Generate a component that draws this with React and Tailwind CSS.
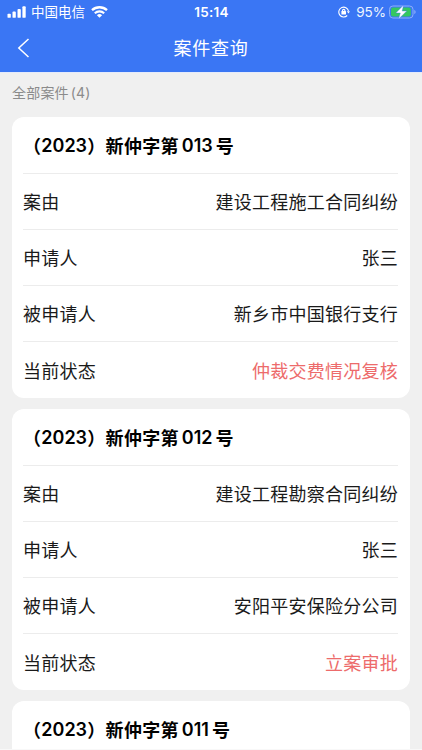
const CASOS = [
  { numero: '013', causa: '建设工程施工合同纠纷', solicitante: '张三', demandado: '新乡市中国银行支行', estado: '仲裁交费情况复核' },
  { numero: '012', causa: '建设工程勘察合同纠纷', solicitante: '张三', demandado: '安阳平安保险分公司', estado: '立案审批' },
  { numero: '011' },
]

function BarraEstado() {
  return (
    <div className="grid h-6 grid-cols-[1fr_auto_1fr] items-center pl-[7px] pr-[6px]">
      <div className="flex items-center">
        <svg className="h-3 w-[19px]" viewBox="0 0 19 12" fill="#fff">
          <rect x="0.5" y="7.7" width="3.3" height="4.1" rx="0.9" />
          <rect x="5.5" y="5.6" width="3.3" height="6.2" rx="0.9" />
          <rect x="10.5" y="3" width="3.3" height="8.8" rx="0.9" />
          <rect x="15.4" y="0.3" width="3.3" height="11.5" rx="0.9" />
        </svg>
        <span className="ml-[5px] pb-[2px] text-[13.5px] leading-[22px]">中国电信</span>
        <svg className="ml-[6px] h-3 w-[17px]" viewBox="0 0 17 12" fill="none" stroke="#fff">
          <path d="M1 4.2a11 11 0 0 1 15 0" strokeWidth="2.3" />
          <path d="M3.8 7.2a7 7 0 0 1 9.4 0" strokeWidth="2.1" />
          <path d="M8.5 11.8 5.9 9.2a3.8 3.8 0 0 1 5.2 0Z" fill="#fff" stroke="none" />
        </svg>
      </div>
      <span className="font-['Inter'] text-[13.5px] font-semibold tracking-[0.3px]">15:14</span>
      <div className="flex items-center justify-end">
        {/* bloqueo de rotación */}
        <svg className="h-3 w-3" viewBox="0 0 12 12" fill="none" stroke="#fff" strokeWidth="1.1">
          <path d="M9.2 9.5a4.9 4.9 0 1 1 1.3-4.5" />
          <path d="m8.8 5.3 3.1-.1-1.4 2.4Z" fill="#fff" stroke="none" />
          <path d="M4.5 5.6v-1a1.2 1.2 0 0 1 2.4 0v1" />
          <rect x="3.4" y="5" width="4.6" height="3.6" rx="0.5" fill="#fff" stroke="none" />
        </svg>
        <span className="ml-[6px] font-['Inter'] text-[13.5px] tracking-[0px] text-blue-50">95%</span>
        <svg className="ml-[3px] h-[14px] w-[27px]" viewBox="0 0 27 14" fill="none">
          <rect x="0.5" y="1" width="23.5" height="12" rx="3.4" stroke="#8eb0fa" />
          <rect x="2" y="2.5" width="19.8" height="9" rx="2" fill="#35c75f" />
          <path d="M25.3 5v4c.8-.3 1.3-1 1.3-2s-.5-1.7-1.3-2Z" fill="#8eb0fa" />
          <path d="M14.6 0 6.8 8h4.5l-1.700 6 8.200-8h-4.600Z" fill="#fff" stroke="#3a76f4" strokeWidth=".4" />
        </svg>
      </div>
    </div>
  )
}

function Fila({ etiqueta, valor, color = 'text-[#1a1a1a]' }) {
  return (
    <div className="flex h-[56.3px] items-center justify-between border-t border-[#ececec] text-[18px] tracking-[0.25px]">
      <span className="text-[#1a1a1a]">{etiqueta}</span>
      <span className={color}>{valor}</span>
    </div>
  )
}

function Tarjeta({ caso }) {
  return (
    <section className="h-[281px] shrink-0 rounded-[12px] bg-white pl-[11px] pr-3">
      <h2 className="flex h-[55.5px] items-center pt-px text-[18px] font-bold tracking-[0.3px] text-black">
        <span>（</span>
        <span className="w-[46px] font-['Inter'] font-semibold tracking-[0px]">2023</span>
        <span>）新仲字第</span>
        <span className="ml-[3px] mr-[3px] font-['Inter'] font-semibold tracking-[0px]">{caso.numero}</span>
        <span>号</span>
      </h2>
      {caso.causa && (
        <>
          <Fila etiqueta="案由" valor={caso.causa} />
          <Fila etiqueta="申请人" valor={caso.solicitante} />
          <Fila etiqueta="被申请人" valor={caso.demandado} />
          <Fila etiqueta="当前状态" valor={caso.estado} color="text-[#ed6b6b]" />
        </>
      )}
    </section>
  )
}

export default function App() {
  return (
    <div className="flex h-[750px] w-[422px] flex-col overflow-hidden border-b border-[#f8f8f8] bg-[#f0f0f0] font-['Noto_Sans_CJK_SC',sans-serif]">
      <header className="h-[73px] shrink-0 border-b border-[#e4ebfc] bg-[#3a76f4] text-white">
        <BarraEstado />
        <div className="grid h-12 grid-cols-[1fr_auto_1fr] items-center">
          <svg className="ml-[17px] h-5 w-[13px]" viewBox="0 0 13 20" fill="none" stroke="#fff" strokeWidth="1.5">
            <path d="M11.5 1 1.8 10l9.700 9" />
          </svg>
          <h1 className="pb-[2px] text-[18px] tracking-[0.7px]">案件查询</h1>
        </div>
      </header>
      <p className="flex h-11 shrink-0 items-center px-3 pb-[5px] text-[14px] tracking-[0.2px] text-[#8b8b8b]">
        全部案件<span className="ml-[2px] font-['Inter'] tracking-[0.2px]">(4)</span>
      </p>
      <main className="flex min-h-0 flex-1 flex-col gap-[11px] overflow-hidden px-3">
        {CASOS.map(c => <Tarjeta key={c.numero} caso={c} />)}
      </main>
    </div>
  )
}
